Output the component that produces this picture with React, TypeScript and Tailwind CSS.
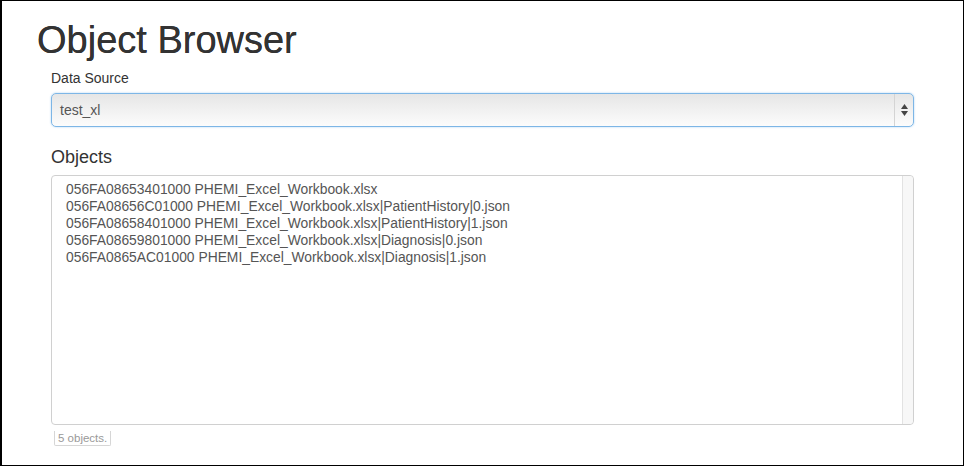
import React from "react";

const rows = [
  "056FA08653401000 PHEMI_Excel_Workbook.xlsx",
  "056FA08656C01000 PHEMI_Excel_Workbook.xlsx|PatientHistory|0.json",
  "056FA08658401000 PHEMI_Excel_Workbook.xlsx|PatientHistory|1.json",
  "056FA08659801000 PHEMI_Excel_Workbook.xlsx|Diagnosis|0.json",
  "056FA0865AC01000 PHEMI_Excel_Workbook.xlsx|Diagnosis|1.json",
];

export default function App() {
  return (
    <div
      className="w-[964px] h-[466px] bg-white border-t border-r border-b border-l-2 border-black overflow-hidden"
      style={{ fontFamily: '"Liberation Sans", Arial, sans-serif' }}
    >
      <h1 className="ml-[35px] mt-[18px] text-[38px] leading-[42px] text-[#333333] font-normal [text-shadow:0_0_0.4px_#333]">
        Object Browser
      </h1>
      <div className="ml-[49px] w-[863px]">
        <div className="mt-[7px] text-[14px] leading-[20px] text-[#333333]">Data Source</div>
        <div className="mt-[5px] h-[34px] rounded-[5px] border border-[#7db6e6] shadow-[0_0_2px_rgba(102,175,233,0.6)] bg-gradient-to-b from-[#e6e6e6] to-[#fcfcfc] flex items-center">
          <div className="flex-1 pl-[8px] text-[14px] text-[#555555]">test_xl</div>
          <div className="w-px self-stretch bg-[#d4d4d4]" />
          <div className="w-[18px] flex flex-col items-center justify-center gap-[2px]">
            <svg width="7" height="5" viewBox="0 0 7 5">
              <path d="M3.5 0 L7 5 L0 5 Z" fill="#444" />
            </svg>
            <svg width="7" height="5" viewBox="0 0 7 5">
              <path d="M0 0 L7 0 L3.5 5 Z" fill="#444" />
            </svg>
          </div>
        </div>
        <div className="mt-[20px] text-[18px] leading-[20px] text-[#333333]">Objects</div>
        <div className="mt-[8px] h-[250px] rounded-[4px] border border-[#d0d0d0] flex">
          <div className="flex-1 pl-[14px] pt-[5px] text-[13.85px] leading-[17px] text-[#555555]">
            {rows.map((r) => (
              <div key={r}>{r}</div>
            ))}
          </div>
          <div className="w-[11px] border-l border-[#e2e2e2] bg-[#f7f7f7] rounded-r-[4px]" />
        </div>
        <div className="ml-[3px] inline-block px-[3px] h-[15px] leading-[14px] text-[11.5px] text-[#999999] border border-t-0 border-[#d6d6d6] rounded-b-[2px]">
          5 objects.
        </div>
      </div>
    </div>
  );
}
